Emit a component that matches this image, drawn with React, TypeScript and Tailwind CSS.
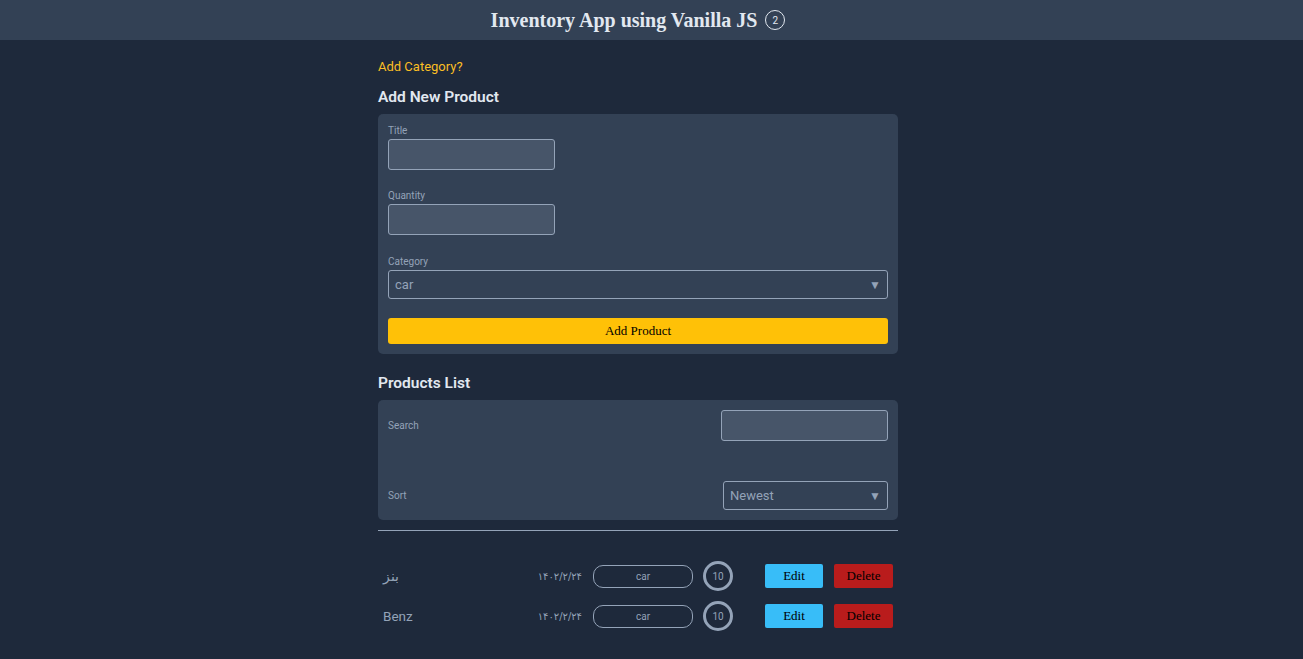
import React from "react";

const serif = { fontFamily: '"Liberation Serif", "Times New Roman", serif' };

function Row({ name }: { name: string }) {
  return (
    <div className="flex h-[40px] items-center justify-between px-[5px]">
      <span className="text-[13.5px] text-[#94a3b8]">{name}</span>
      <div className="flex items-center">
        <span
          dir="ltr"
          className="text-[10px] text-[#94a3b8]"
          style={{ fontFamily: '"DejaVu Sans", "Noto Sans", sans-serif' }}
        >
          ۱۴۰۲/۲/۲۴
        </span>
        <span className="ml-[11px] flex h-[23px] w-[100px] items-center justify-center rounded-[10px] border border-[#94a3b8] text-[10px] text-[#94a3b8]">
          car
        </span>
        <span className="ml-[10px] flex h-[30px] w-[30px] items-center justify-center rounded-full border-[3px] border-[#94a3b8] text-[10px] text-[#94a3b8]">
          10
        </span>
        <button
          style={serif}
          className="ml-[32px] flex h-[24px] w-[58px] items-center justify-center rounded-[2px] bg-[#38bdf8] text-[13px] text-black"
        >
          Edit
        </button>
        <button
          style={serif}
          className="ml-[11px] flex h-[24px] w-[59px] items-center justify-center rounded-[2px] bg-[#b91c1c] text-[13px] text-black"
        >
          Delete
        </button>
      </div>
    </div>
  );
}

export default function App() {
  return (
    <div
      className="min-h-[659px] bg-[#1e293b]"
      style={{ fontFamily: 'Roboto, "Liberation Sans", Arial, sans-serif' }}
    >
      <header className="h-[40px] bg-[#334155]">
        <div className="flex h-[40px] w-[1276px] items-center justify-center">
          <h1 style={serif} className="text-[20px] font-bold text-[#e2e8f0]">
            Inventory App using Vanilla JS
          </h1>
          <span className="ml-[8px] flex h-[20px] w-[20px] items-center justify-center rounded-full border border-[#e2e8f0] text-[10px] text-[#e2e8f0]">
            2
          </span>
        </div>
      </header>

      <div className="w-[1276px]">
        <main className="mx-auto w-[520px] pt-[17px]">
          <p className="text-[13px] leading-[20px] text-[#fbbf24]">Add Category?</p>
          <h2 className="mt-[8px] mb-[5px] text-[15.5px] font-semibold leading-[24px] text-[#e2e8f0]">
            Add New Product
          </h2>
          <div className="rounded-[5px] bg-[#334155] p-[10px]">
            <label className="mb-[3px] block pt-[1px] text-[10px] leading-[11px] text-[#94a3b8]">Title</label>
            <div className="h-[31px] w-[167px] rounded-[3px] border border-[#94a3b8] bg-[#475569]" />
            <label className="mt-[19px] mb-[3px] block pt-[1px] text-[10px] leading-[11px] text-[#94a3b8]">
              Quantity
            </label>
            <div className="h-[31px] w-[167px] rounded-[3px] border border-[#94a3b8] bg-[#475569]" />
            <label className="mt-[20px] mb-[3px] block pt-[1px] text-[10px] leading-[11px] text-[#94a3b8]">
              Category
            </label>
            <div className="flex h-[29px] items-center justify-between rounded-[3px] border border-[#94a3b8] px-[6px] text-[13px] text-[#94a3b8]">
              <span>car</span>
              <span className="text-[12px]">▼</span>
            </div>
            <button
              style={serif}
              className="mt-[19px] flex h-[26px] w-full items-center justify-center rounded-[3px] bg-[#ffc107] text-[13px] text-black"
            >
              Add Product
            </button>
          </div>

          <h2 className="mt-[17px] mb-[5px] text-[15.5px] font-semibold leading-[24px] text-[#e2e8f0]">
            Products List
          </h2>
          <div className="rounded-[5px] bg-[#334155] p-[10px]">
            <div className="flex items-center justify-between">
              <span className="text-[10px] text-[#94a3b8]">Search</span>
              <div className="h-[31px] w-[167px] rounded-[3px] border border-[#94a3b8] bg-[#475569]" />
            </div>
            <div className="mt-[40px] flex items-center justify-between">
              <span className="text-[10px] text-[#94a3b8]">Sort</span>
              <div className="flex h-[29px] w-[165px] items-center justify-between rounded-[3px] border border-[#94a3b8] px-[6px] text-[13px] text-[#94a3b8]">
                <span>Newest</span>
                <span className="text-[12px]">▼</span>
              </div>
            </div>
          </div>
          <div className="mt-[10px] h-[1px] bg-[#94a3b8]" />
          <div className="mt-[25px]">
            <Row name="بنز" />
            <Row name="Benz" />
          </div>
        </main>
      </div>
    </div>
  );
}
